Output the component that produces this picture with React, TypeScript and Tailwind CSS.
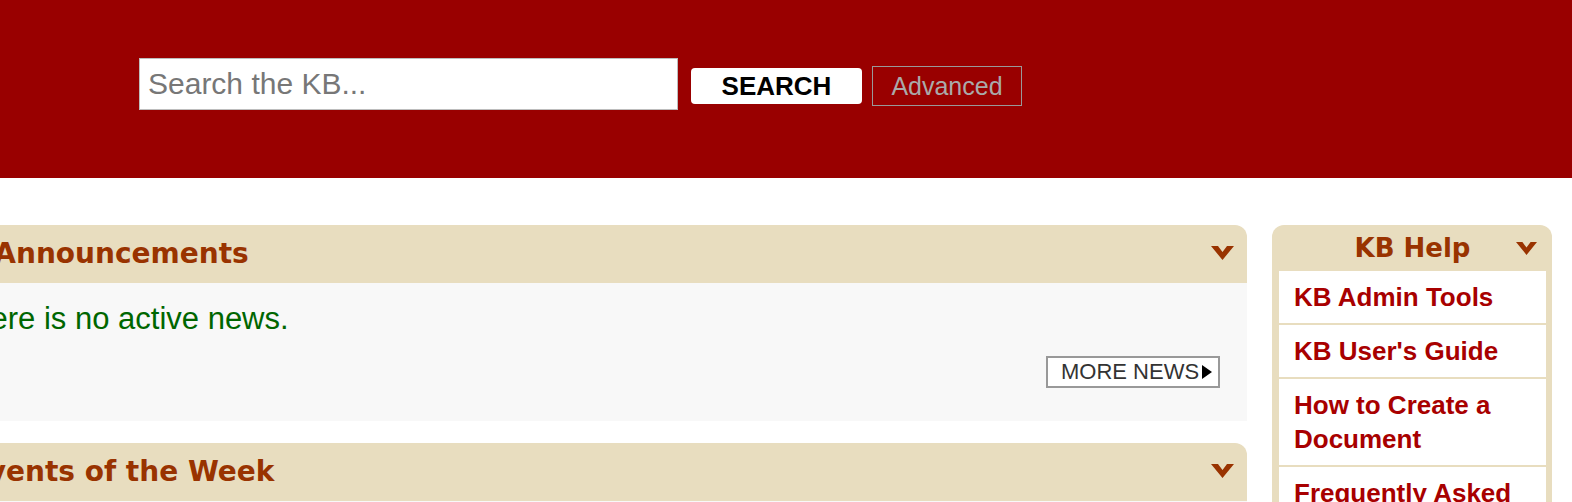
import React from "react";

const helpLinks = [
    "KB Admin Tools",
    "KB User's Guide",
    "How to Create a Document",
    "Frequently Asked Questions",
    "Contact the KB Team",
];

function Chevron({ className }: { className?: string }) {
    return (
        <svg className={className} viewBox="0 0 23 14" width="23" height="14" aria-hidden="true">
            <polygon points="0,0 7,0 11.5,6 16,0 23,0 11.5,14" fill="#993300" />
        </svg>
    );
}

function PanelHeader({ title }: { title: string }) {
    return (
        <div className="relative h-[58px] bg-[#e8ddbf] rounded-tr-[12px] flex items-center justify-center">
            <h2 className="text-[28px] font-bold text-[#993300] font-['DejaVu_Sans',Verdana,sans-serif] leading-none">
                {title}
            </h2>
            <Chevron className="absolute right-[13px] top-[21px]" />
        </div>
    );
}

export default function App() {
    return (
        <div className="w-full h-screen overflow-hidden bg-white font-['Liberation_Sans',Arial,sans-serif]">
            <header className="h-[178px] bg-[#990000] pl-[139px] pt-[58px]">
                <form className="flex items-center" onSubmit={(e) => e.preventDefault()}>
                    <input
                        type="text"
                        placeholder="Search the KB..."
                        className="w-[539px] h-[52px] bg-white border border-[#bdbdbd] shadow-[inset_0_0_0_1px_#ffffff] px-[8px] text-[30px] text-black placeholder:text-[#777777] outline-none"
                    />
                    <button
                        type="submit"
                        className="ml-[13px] mt-[4px] w-[171px] h-[36px] bg-white rounded-[4px] text-[26px] font-bold text-black leading-none"
                    >
                        SEARCH
                    </button>
                    <a
                        href="#"
                        className="ml-[10px] mt-[4px] w-[150px] h-[40px] border border-[#999999] flex items-center justify-center text-[25px] text-[#aaaaaa] leading-none"
                    >
                        Advanced
                    </a>
                </form>
            </header>

            <main className="flex items-start gap-[25px] pt-[47px] pr-[20px]">
                <div className="flex-1 ml-[-1004px] flex flex-col gap-[22px]">
                    <section>
                        <PanelHeader title="Announcements" />
                        <div className="bg-[#f8f8f8] h-[138px] pt-[18px] flex flex-col">
                            <p className="text-center text-[31px] leading-[36px] text-[#006600]">
                                There is no active news.
                            </p>
                            <div className="flex justify-end pr-[27px] mt-[19px]">
                                <a
                                    href="#"
                                    className="h-[32px] w-[174px] border-2 border-[#999999] bg-white flex items-center pl-[13px] gap-[3px] text-[22px] text-[#333333] leading-none"
                                >
                                    MORE NEWS
                                    <svg viewBox="0 0 10 14" width="10" height="14" aria-hidden="true">
                                        <polygon points="0,0 10,7 0,14" fill="#000000" />
                                    </svg>
                                </a>
                            </div>
                        </div>
                    </section>
                    <section>
                        <PanelHeader title="Events of the Week" />
                        <div className="bg-[#f8f8f8] h-[200px]" />
                    </section>
                </div>

                <aside className="w-[280px] shrink-0 bg-[#e8ddbf] rounded-t-[12px] pl-[7px] pr-[6px]">
                    <div className="relative h-[46px] flex items-center justify-center">
                        <h2 className="text-[26px] font-bold text-[#993300] font-['DejaVu_Sans',Verdana,sans-serif] leading-none">
                            KB Help
                        </h2>
                        <Chevron className="absolute right-[9px] top-[17px] w-[21px] h-[13px]" />
                    </div>
                    <ul className="flex flex-col gap-[2px]">
                        {helpLinks.map((link) => (
                            <li key={link} className="bg-white pl-[15px] pr-[10px] pt-[9px] pb-[9px]">
                                <a href="#" className="text-[26px] leading-[34px] font-bold text-[#a80000]">
                                    {link}
                                </a>
                            </li>
                        ))}
                    </ul>
                </aside>
            </main>
        </div>
    );
}
